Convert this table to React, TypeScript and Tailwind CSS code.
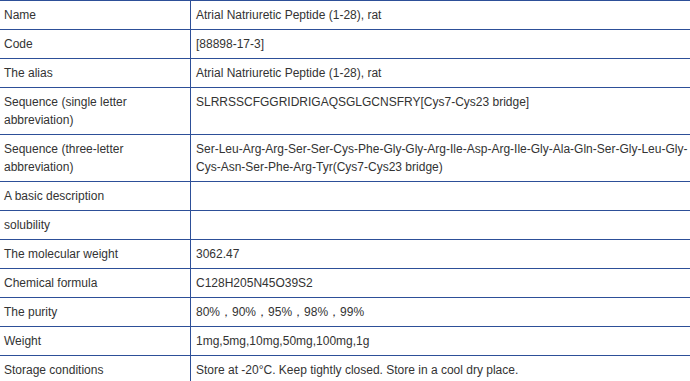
import React from "react";

const rows: [string, string][] = [
  ["Name", "Atrial Natriuretic Peptide (1-28), rat"],
  ["Code", "[88898-17-3]"],
  ["The alias", "Atrial Natriuretic Peptide (1-28), rat"],
  ["Sequence (single letter abbreviation)", "SLRRSSCFGGRIDRIGAQSGLGCNSFRY[Cys7-Cys23 bridge]"],
  [
    "Sequence (three-letter abbreviation)",
    "Ser-Leu-Arg-Arg-Ser-Ser-Cys-Phe-Gly-Gly-Arg-Ile-Asp-Arg-Ile-Gly-Ala-Gln-Ser-Gly-Leu-Gly-Cys-Asn-Ser-Phe-Arg-Tyr(Cys7-Cys23 bridge)",
  ],
  ["A basic description", ""],
  ["solubility", ""],
  ["The molecular weight", "3062.47"],
  ["Chemical formula", "C128H205N45O39S2"],
  ["The purity", "80%，90%，95%，98%，99%"],
  ["Weight", "1mg,5mg,10mg,50mg,100mg,1g"],
  ["Storage conditions", "Store at -20°C. Keep tightly closed. Store in a cool dry place."],
];

export default function App() {
  return (
    <div
      className="w-[690px] h-[381px] overflow-hidden bg-white text-[12px] leading-[18px] text-[#333333]"
      style={{ fontFamily: '"Liberation Sans", Arial, sans-serif' }}
    >
      <div className="border-t border-[#2d4f98]">
        {rows.map(([k, v], i) => (
          <div key={i} className="flex border-b border-[#2d4f98]">
            <div className="w-[191px] shrink-0 border-r border-[#2d4f98] pl-[4px] pr-[5px] py-[5px]">
              {k}
            </div>
            <div className="flex-1 min-w-0 pl-[5px] pr-0 py-[5px] min-h-[28px]">{v}</div>
          </div>
        ))}
      </div>
    </div>
  );
}
